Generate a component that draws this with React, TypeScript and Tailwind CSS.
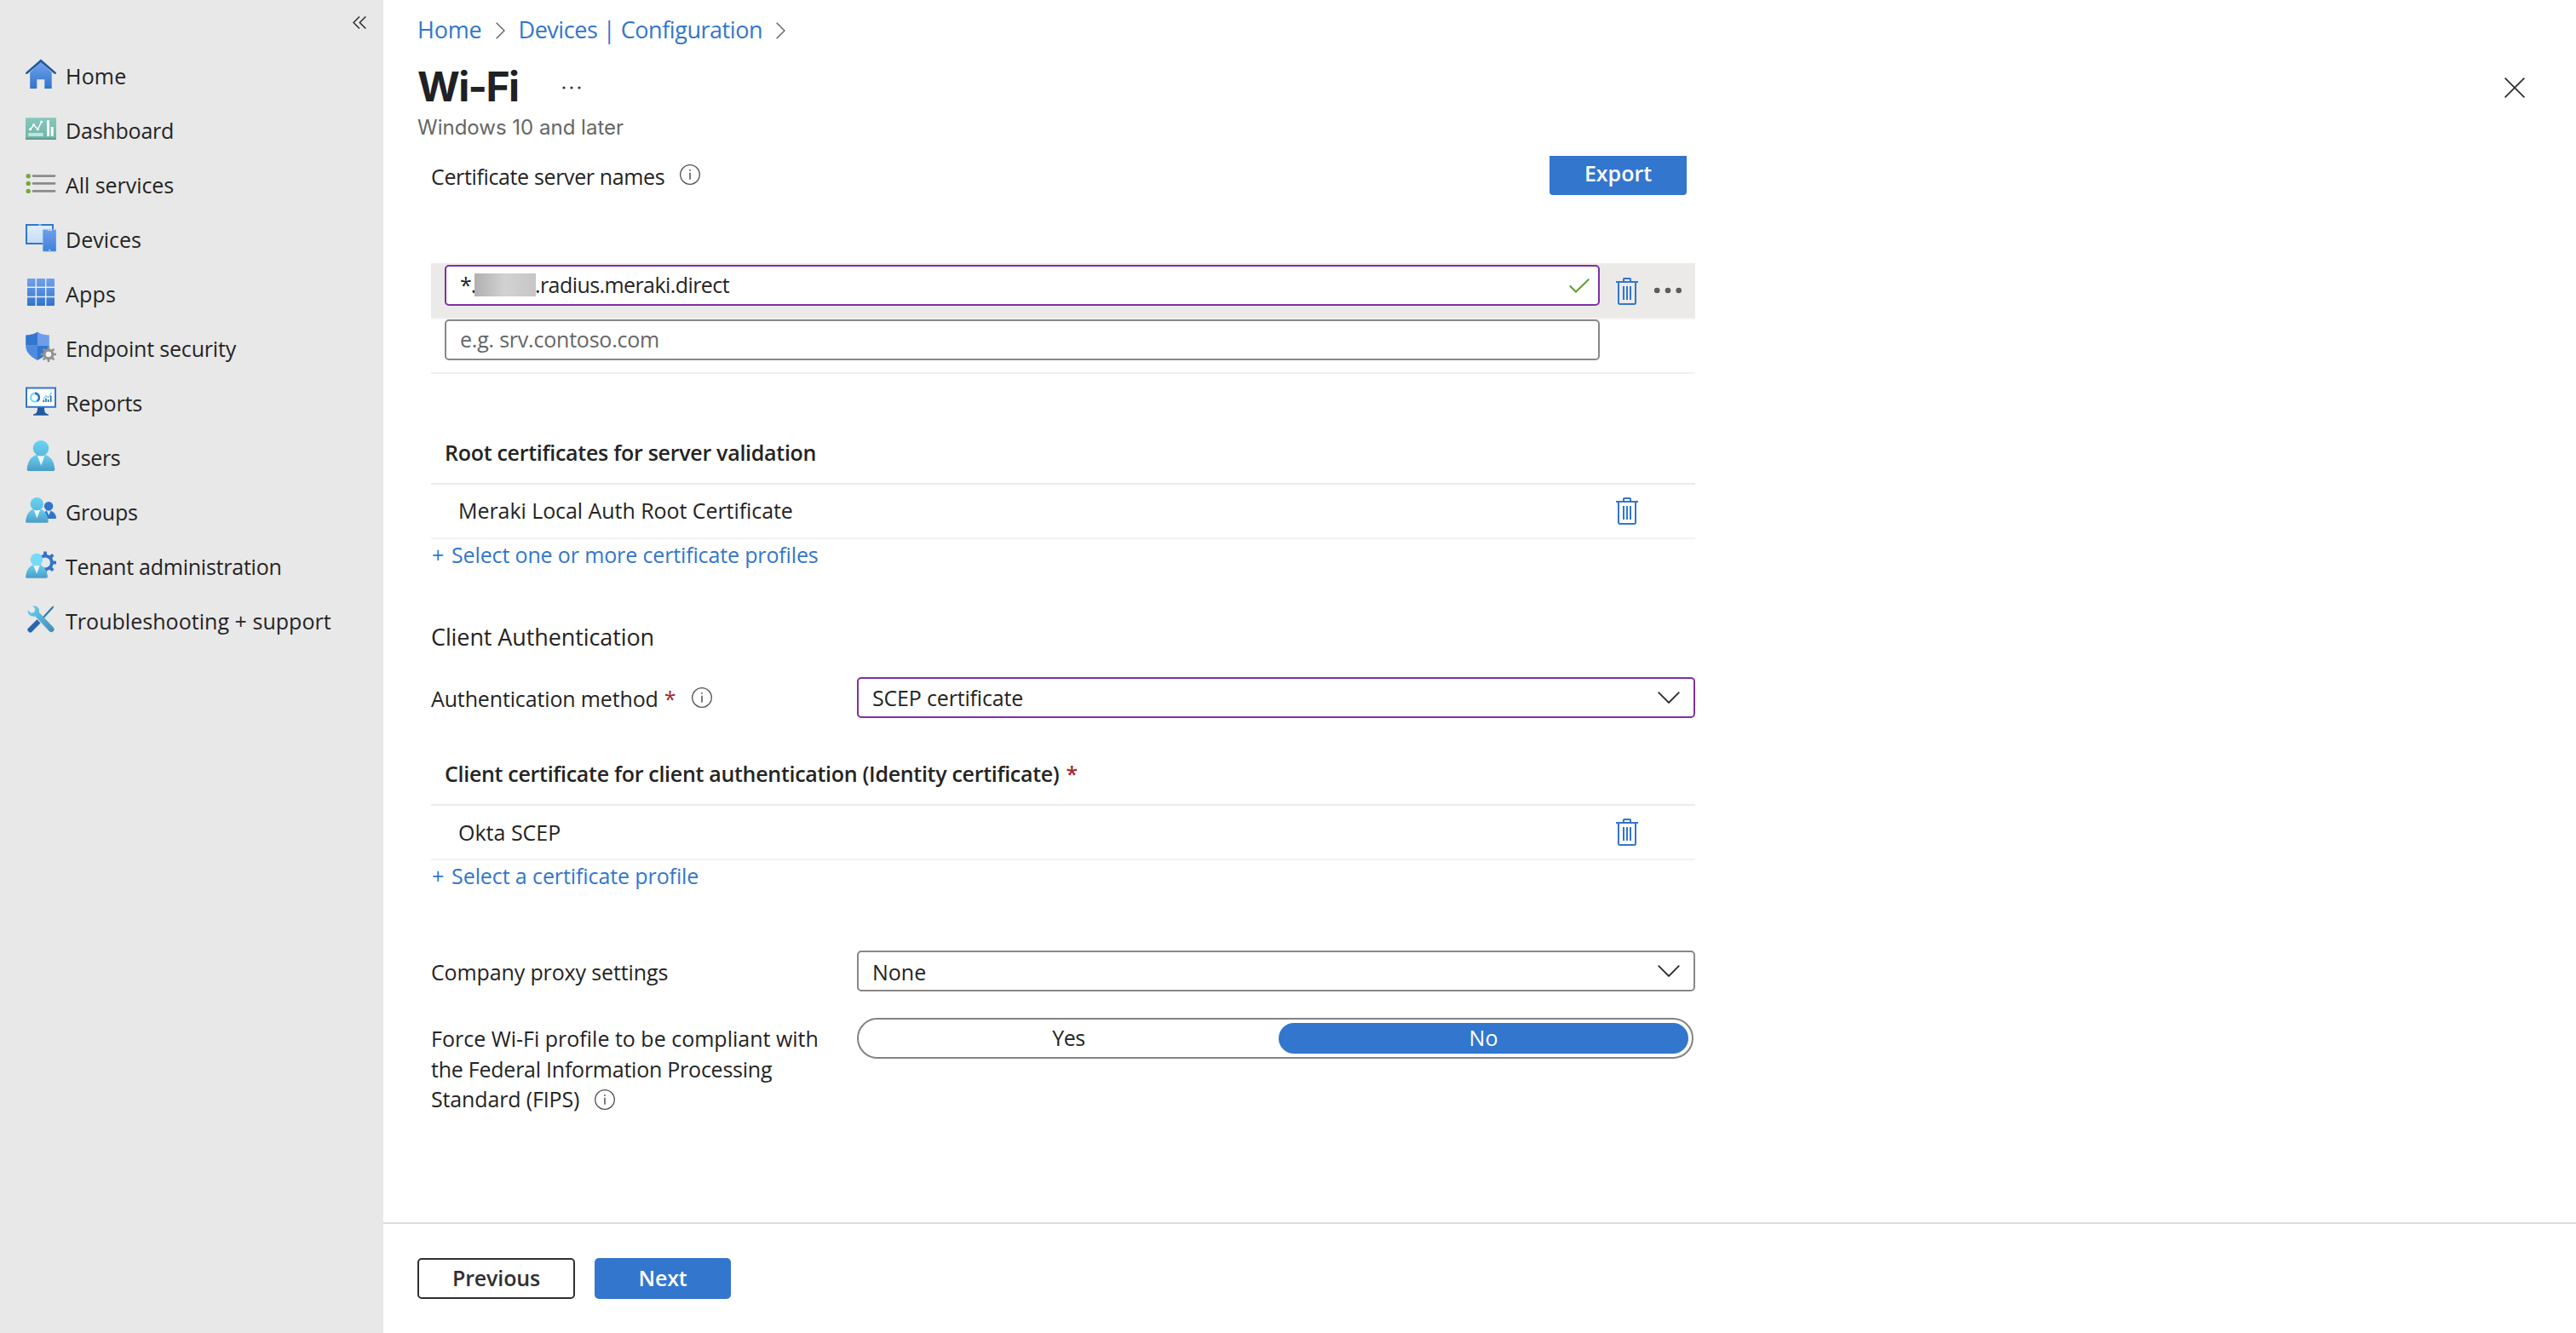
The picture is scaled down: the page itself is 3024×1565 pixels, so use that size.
import type { ReactNode } from 'react'

function gearPath(cx: number, cy: number, outer: number, inner: number, teeth = 8) {
  const step = (Math.PI * 2) / teeth
  const pts: string[] = []
  for (let i = 0; i < teeth; i++) {
    const a = i * step - Math.PI / 2
    const corners: [number, number][] = [[inner, -0.27], [outer, -0.17], [outer, 0.17], [inner, 0.27]]
    corners.forEach(([r, o]) => pts.push(`${(cx + r * Math.cos(a + o * step)).toFixed(2)} ${(cy + r * Math.sin(a + o * step)).toFixed(2)}`))
  }
  return `M${pts.join('L')}Z`
}

function Gradients() {
  return (
    <svg className="absolute w-0 h-0" aria-hidden="true">
      <defs>
        <linearGradient id="blue" x1="0" y1="0" x2="0" y2="1"><stop offset="0" stopColor="#72a1ec" /><stop offset="1" stopColor="#2f74cc" /></linearGradient>
        <linearGradient id="phone" x1="0" y1="0" x2="0" y2="1"><stop offset="0" stopColor="#6f9fea" /><stop offset="1" stopColor="#3f81da" /></linearGradient>
        <linearGradient id="screen" x1="0" y1="0" x2="0" y2="1"><stop offset="0" stopColor="#e0f0fa" /><stop offset="1" stopColor="#c4dcf6" /></linearGradient>
        <linearGradient id="person" x1="0" y1="0" x2="0" y2="1"><stop offset="0" stopColor="#68d0f0" /><stop offset="1" stopColor="#4b9cc6" /></linearGradient>
        <linearGradient id="head" x1="0" y1="0" x2="0" y2="1"><stop offset="0" stopColor="#6ad3f3" /><stop offset="1" stopColor="#59b9dc" /></linearGradient>
        <linearGradient id="green" x1="0" y1="0" x2="0" y2="1"><stop offset="0" stopColor="#86c8bd" /><stop offset="1" stopColor="#6fb3a6" /></linearGradient>
        <linearGradient id="wrench" x1="0" y1="0" x2="1" y2="1"><stop offset="0" stopColor="#6cd5f5" /><stop offset="1" stopColor="#3f89b4" /></linearGradient>
      </defs>
    </svg>
  )
}

const icons: Record<string, ReactNode> = {
  home: (
    <>
      <path d="M5.2 16 18 4l12.7 12v19h-8.4V24.3h-9V35H5.2z" fill="url(#blue)" />
      <path d="M18 .4 36 16.2v1.6h-2.2L18 4.2 2.2 17.8H0v-1.6z" fill="#225a9f" />
    </>
  ),
  dashboard: (
    <>
      <rect x="0" y="5.3" width="36" height="25.7" rx=".6" fill="url(#green)" />
      <rect x="0" y="29" width="36" height="2" fill="#5c9f90" />
      <path d="M5.7 18.7 9.7 13.7l4.6 5L18.7 10" fill="none" stroke="#fff" strokeWidth="1.4" />
      <circle cx="5.7" cy="18.7" r="1.6" fill="#fff" /><circle cx="9.7" cy="13.7" r="1.6" fill="#fff" />
      <circle cx="14.3" cy="18.7" r="1.6" fill="#fff" /><circle cx="18.7" cy="10" r="1.6" fill="#fff" />
      <path d="M25 8.3h3V27h-3zM29.7 16h3v11h-3z" fill="#fff" />
      <rect x="3.3" y="23" width="17.4" height="4" fill="#c3e3dc" />
    </>
  ),
  services: (
    <>
      <g fill="#76a93c"><circle cx="3.2" cy="9.7" r="2.7" /><circle cx="3.2" cy="18.4" r="2.7" /><circle cx="3.2" cy="27.4" r="2.7" /></g>
      <path d="M9 9.6h25M9 18.4h25M9 27.4h25" stroke="#8b8b8b" strokeWidth="2.9" strokeLinecap="round" />
    </>
  ),
  devices: (
    <>
      <rect x="1" y="3" width="31" height="22" fill="url(#screen)" stroke="#3276cd" strokeWidth="2" />
      <path d="M15 3h3.6" stroke="#7dabe6" strokeWidth="2" />
      <rect x="20.2" y="8.4" width="15.8" height="25.8" rx=".6" fill="url(#phone)" stroke="#a9c8f3" strokeWidth=".5" />
      <path d="M26 9.4h5" stroke="#b5d1f5" strokeWidth="1.2" />
      <circle cx="28.3" cy="32.6" r=".9" fill="#e9f2fd" />
    </>
  ),
  apps: (
    <>
      <rect x="2" y="2" width="32" height="32" rx=".8" fill="url(#blue)" />
      <path d="M12.3 2v32M23.7 2v32M2 12.2h32M2 23.6h32" stroke="#e6ecf5" strokeWidth="1.5" />
    </>
  ),
  security: (
    <>
      <path d="M14 .4C10.5 3.4 5 4 .2 4.4v12.3H14z" fill="#3276ce" />
      <path d="M14 .4c3.5 3 9 3.6 13.8 4v12.3H14z" fill="#6c9ee9" />
      <path d="M.2 16.7C.2 25.5 7 30.3 14 34V16.7z" fill="#4d8be0" />
      <path d="M27.8 16.7C27.8 25.5 21 30.3 14 34V16.7z" fill="#3276ce" />
      <path d={gearPath(27, 27, 9.2, 6.4)} fill="#919191" />
      <circle cx="27" cy="27" r="3.3" fill="#eef3f8" />
    </>
  ),
  reports: (
    <>
      <path d="M14 25h8c0 5 .5 7.500 5 8.600v1.200H9v-1.200c4.500-1.100 5-3.600 5-8.600z" fill="#225a9f" />
      <rect x="1" y="2.5" width="34" height="22.3" fill="#fff" stroke="#3276cd" strokeWidth="2" />
      <circle cx="11" cy="13.7" r="4.9" fill="none" stroke="#72ddf7" strokeWidth="2.4" />
      <path d="M11 8.800a4.900 4.900 0 0 1 2.500 9.100" fill="none" stroke="#2c70c8" strokeWidth="2.4" />
      <path d="M21.300 19v-2.500M24 19v-4.500M26.700 19v-3M29.700 19v-7.500" stroke="#2c63ab" strokeWidth="1.6" />
      <path d="M20.800 15.500 24 11.500l2.700 2.200L30 8.500" fill="none" stroke="#62c6e6" strokeWidth="1.1" />
      <circle cx="30" cy="8.3" r="1" fill="#72ddf7" />
    </>
  ),
  users: (
    <>
      <path d="M4 36c-1.600 0-2.500-1-2.300-2.600C2.500 25 6 19.500 12.500 17h11c6.500 2.500 10 8 10.800 16.400.2 1.600-.7 2.600-2.300 2.600z" fill="url(#person)" />
      <path d="M13.800 17.500h8.800L18.300 29.700z" fill="#eef6fb" />
      <circle cx="18" cy="9.3" r="9.2" fill="url(#head)" />
    </>
  ),
  groups: (
    <>
      <path d="M20 28c.5-5 2-8 4.500-9.500h5c4 1.500 6 4.500 6.500 8.300.1.800-.3 1.200-1 1.200z" fill="#3074cc" />
      <path d="M24.600 18.500h5L27.400 24z" fill="#dcebf9" />
      <circle cx="27.1" cy="13.2" r="5.2" fill="#3074cc" />
      <path d="M1.800 32.700C.6 32.700 0 32 .1 30.800.9 24 3.500 19 8.600 16.700h9.600c5 2.300 7.700 7.300 8.600 14.100.1 1.200-.6 1.900-1.800 1.900z" fill="url(#person)" />
      <path d="M9.600 17.200h7.600L13.400 27.500z" fill="#eef6fb" />
      <circle cx="13.3" cy="10.7" r="7.6" fill="url(#head)" />
    </>
  ),
  tenant: (
    <>
      <path d={gearPath(23, 15.5, 13.2, 9.8)} fill="#3074cc" />
      <circle cx="23" cy="15.5" r="6" fill="#e8e8e8" />
      <path d="M1.800 33.700C.6 33.700 0 33 .1 31.800.9 25.500 3.500 20.500 8.400 18.300h9.200c5 2.200 7.500 7.200 8.300 13.500.1 1.200-.5 1.900-1.700 1.900z" fill="url(#person)" />
      <path d="M9.200 18.700h7.600L13.100 28.500z" fill="#eef6fb" />
      <circle cx="13" cy="12" r="7.3" fill="#76dcf6" />
    </>
  ),
  support: (
    <>
      <path d="M33.300 2.200 31 3.200 18.500 17l1.600 1.500L32.500 5z" fill="#2f7ba6" />
      <path d="M13.500 18.300 3 28.800c-1 1-1 2.200 0 3.200l.9 1c1 1 2.400 1 3.300 0L17.500 22.400z" fill="#2a64ad" />
      <path d="M8.300 2.300c4.800-1 8.600 2.500 7.700 7.600l16.600 17.600c1.400 1.500 1.400 3.200.2 4.600-1.300 1.500-3.400 1.500-4.800.1L11.300 14.500c-5 1.100-9.500-2.300-8.700-7.300l4 3.500 3.700-.9 1-3.700z" fill="url(#wrench)" />
    </>
  ),
}

const navItems = [
  { icon: 'home', label: 'Home', cls: 'tracking-[0.2px]' },
  { icon: 'dashboard', label: 'Dashboard', cls: 'tracking-[-0.2px]' },
  { icon: 'services', label: 'All services', cls: 'tracking-[-0.05px]' },
  { icon: 'devices', label: 'Devices', cls: 'tracking-[0px]' },
  { icon: 'apps', label: 'Apps', cls: 'tracking-[0.2px]' },
  { icon: 'security', label: 'Endpoint security', cls: 'tracking-[-0.18px]' },
  { icon: 'reports', label: 'Reports', cls: 'tracking-[-0.1px]' },
  { icon: 'users', label: 'Users', cls: 'tracking-[-0.4px]' },
  { icon: 'groups', label: 'Groups', cls: 'tracking-[-0.2px]' },
  { icon: 'tenant', label: 'Tenant administration', cls: 'tracking-[-0.24px]' },
  { icon: 'support', label: 'Troubleshooting + support', cls: 'tracking-[0.04px]' },
]

function InfoIcon() {
  return (
    <svg width="24" height="24" viewBox="0 0 24 24" className="shrink-0">
      <circle cx="12" cy="12" r="11.3" fill="none" stroke="#4f4f4f" strokeWidth="1.3" />
      <path d="M12 9.800v8M12 6v1.800" stroke="#4f4f4f" strokeWidth="1.5" />
    </svg>
  )
}

function TrashIcon() {
  return (
    <svg width="26" height="32" viewBox="0 0 26 32" fill="none" stroke="#3276cd" strokeWidth="2" className="shrink-0">
      <path d="M0 5h26M9 5V1.800Q9 1 9.800 1h6.400q.8 0 .8.800V5M3 5v24q0 2 1.500 2h17q1.500 0 1.500-2V5M9 10v16M13 10v16M17 10v16" />
    </svg>
  )
}

function ChevronDown() {
  return (
    <svg width="26" height="14" viewBox="0 0 26 14" fill="none" stroke="#2b2b2b" strokeWidth="1.8"><path d="M.7.700 13 13 25.300.700" /></svg>
  )
}

function Crumb() {
  return (
    <svg width="11" height="20" viewBox="0 0 11 20" fill="none" stroke="#666" strokeWidth="1.5" className="shrink-0 mx-4 mt-[3px]"><path d="M.700.700 10 10 .700 19.300" /></svg>
  )
}

export default function App() {
  return (
    <div className="flex w-[3024px] h-[1565px] overflow-hidden bg-white font-['Open_Sans','Noto_Sans',sans-serif] text-[25px] text-[#242424] leading-[36px] whitespace-nowrap">
      <Gradients />
      <aside className="w-[450px] shrink-0 bg-[#e8e8e8] flex flex-col">
        <div className="h-[55px] flex justify-end pt-[19px] pr-[20px]">
          <svg width="16" height="15" viewBox="0 0 16 15" fill="none" stroke="#2b2b2b" strokeWidth="1.5"><path d="M8 .500 1 7.500l7 7M15.300.500l-7 7 7 7" /></svg>
        </div>
        <nav>
          {navItems.map(n => (
            <a key={n.label} className="flex items-center h-16 pl-[30px] gap-[11px]">
              <svg width="36" height="36" viewBox="0 0 36 36">{icons[n.icon]}</svg>
              <span className={`mt-[3px] ${n.cls}`}>{n.label}</span>
            </a>
          ))}
        </nav>
      </aside>

      <main className="flex-1 flex flex-col">
        <header className="pl-[40px]">
          <div className="flex items-center h-[69px] text-[27px] text-[#3276cd]">
            <span className="tracking-[-0.2px]">Home</span>
            <Crumb />
            <span className="tracking-[-0.46px]">Devices | Configuration</span>
            <Crumb />
          </div>
          <div className="flex items-center h-[65px]">
            <h1 className="font-['Inter',sans-serif] font-bold text-[48px] leading-[64px] tracking-[-1.6px] text-[#202124]">Wi-Fi</h1>
            <svg width="22" height="6" viewBox="0 0 22 6" className="ml-[52px] mt-[3px]" fill="#333"><circle cx="2" cy="3" r="1.6" /><circle cx="11" cy="3" r="1.6" /><circle cx="20" cy="3" r="1.6" /></svg>
            <svg width="24" height="24" viewBox="0 0 24 24" className="ml-auto mr-[60px] mt-[3px]" stroke="#2b2b2b" strokeWidth="1.7"><path d="m.600.600 22.800 22.800M23.400.600.600 23.400" /></svg>
          </div>
          <p className="h-[31px] leading-[31px] font-['Inter',sans-serif] text-[24px] text-[#666]">Windows 10 and later</p>
        </header>

        <section className="ml-[56px] w-[1484px] mt-[18px]">
          <div className="flex items-center h-[46px]">
            <span className="tracking-[-0.36px] pt-px">Certificate server names</span>
            <span className="ml-[18px] mb-[2px]"><InfoIcon /></span>
            <button className="ml-auto mr-[10px] w-[161px] h-[46px] pb-[6px] rounded-b-[4px] bg-[#3276cd] text-white font-semibold">Export</button>
          </div>

          {/* Server names */}
          <div className="mt-[80px] h-[66px] flex pt-[2px] pl-4 bg-[#ebeae9] border-b-2 border-[#f3f2f1]">
            <div className="w-[1356px] h-[48px] flex items-center pb-[3px] pl-4 pr-[10px] bg-white border-2 border-[#8030a3] rounded-[5px]">
              <span className="w-[17px] tracking-[-1px]">*.</span>
              <span className="w-[72px] h-[27px] mt-[1px] bg-linear-to-r from-[#b0b0b0] via-[#d2d2d2] to-[#c6c6c6]" />
              <span className="-ml-px tracking-[-0.58px]">.radius.meraki.direct</span>
              <svg width="24" height="17" viewBox="0 0 24 17" className="ml-auto mt-[3px]" fill="none" stroke="#5f9f2c" strokeWidth="2"><path d="m.800 8.500 7.200 7L23.300.800" /></svg>
            </div>
            <div className="ml-[19px] mt-[15px]"><TrashIcon /></div>
            <svg width="34" height="8" viewBox="0 0 34 8" className="ml-[18px] mt-[26px]" fill="#5d5c5a"><circle cx="4.2" cy="4" r="3.3" /><circle cx="17" cy="4" r="3.3" /><circle cx="29.7" cy="4" r="3.3" /></svg>
          </div>
          <div className="h-[64px] pl-4 border-b-2 border-[#f0f0f0]">
            <div className="w-[1356px] h-[48px] flex items-center pb-[3px] pl-4 border-2 border-[#8a8886] rounded-[5px] text-[#666] tracking-[-0.22px]">e.g. srv.contoso.com</div>
          </div>

          <h2 className="mt-[56px] h-[74px] leading-[72px] pl-4 font-semibold tracking-[-0.28px] border-b-2 border-[#ebebeb]">Root certificates for server validation</h2>
          <div className="h-[64px] flex items-center pl-8 pr-[67px] justify-between border-b-2 border-[#f2f2f2]">
            <span className="pb-[3px] tracking-[-0.06px]">Meraki Local Auth Root Certificate</span>
            <TrashIcon />
          </div>
          <a className="block text-[#3276cd] tracking-[-0.14px]"><span className="ml-px mr-[2.5px]">+</span> Select one or more certificate profiles</a>

          {/* Client authentication */}
          <h3 className="mt-[58px] h-10 leading-[42px] text-[27px] tracking-[-0.1px]">Client Authentication</h3>
          <div className="mt-[28px] flex items-center h-[48px]">
            <div className="w-[500px] flex items-center pt-[2px]">
              <span className="tracking-[-0.14px]">Authentication method</span>
              <span className="ml-[7px] text-[#a4262c]">*</span>
              <span className="ml-[18.5px] mb-[3px]"><InfoIcon /></span>
            </div>
            <div className="flex-1 h-[48px] flex items-center justify-between pl-4 pr-4 border-2 border-[#8030a3] rounded-[5px]"><span className="tracking-[-0.18px]">SCEP certificate</span><ChevronDown /></div>
          </div>

          <h2 className="mt-[29px] h-[74px] leading-[72px] pl-4 font-semibold border-b-2 border-[#ebebeb]">
            <span className="tracking-[-0.3px]">Client certificate for client authentication (Identity certificate)</span>
            <span className="ml-[8px] text-[#a4262c]">*</span>
          </h2>
          <div className="h-[64px] flex items-center pl-8 pr-[67px] justify-between border-b-2 border-[#f2f2f2]">
            <span className="pb-[1px]">Okta SCEP</span>
            <TrashIcon />
          </div>
          <a className="block text-[#3276cd] tracking-[-0.1px]"><span className="ml-px mr-[2.5px]">+</span> Select a certificate profile</a>

          <div className="mt-[70px] flex items-center h-[48px]">
            <span className="w-[500px] tracking-[-0.13px] pt-px">Company proxy settings</span>
            <div className="flex-1 h-[48px] flex items-center justify-between pl-4 pr-4 border-2 border-[#8a8886] rounded-[5px]"><span className="pt-px">None</span><ChevronDown /></div>
          </div>

          <div className="mt-[31px] flex items-start">
            <div className="w-[500px] pt-[7px] leading-[35.5px]">
              <span className="block">Force Wi-Fi profile to be compliant with</span>
              <span className="block tracking-[-0.24px]">the Federal Information Processing</span>
              <span className="flex items-center"><span className="tracking-[-0.15px]">Standard (FIPS)</span><span className="ml-[18px]"><InfoIcon /></span></span>
            </div>
            <div className="w-[982px] h-[48px] flex p-1 border-2 border-[#838383] rounded-full text-center leading-[32px]">
              <span className="flex-1 pt-px pr-1 tracking-[-0.4px]">Yes</span>
              <span className="w-[481px] h-9 pt-px rounded-full bg-[#3276cd] text-white">No</span>
            </div>
          </div>
        </section>

        <footer className="mt-auto h-[130px] border-t-2 border-[#dcdcdc] pt-[40px] pl-[40px] flex gap-[23px] font-semibold">
          <button className="w-[185px] h-[48px] pb-[3px] border-2 border-[#303030] rounded-[5px] text-[#303030] tracking-[-0.15px]">Previous</button>
          <button className="w-[160px] h-[48px] pb-[3px] rounded-[5px] bg-[#3276cd] text-white tracking-[-0.2px]">Next</button>
        </footer>
      </main>
    </div>
  )
}
